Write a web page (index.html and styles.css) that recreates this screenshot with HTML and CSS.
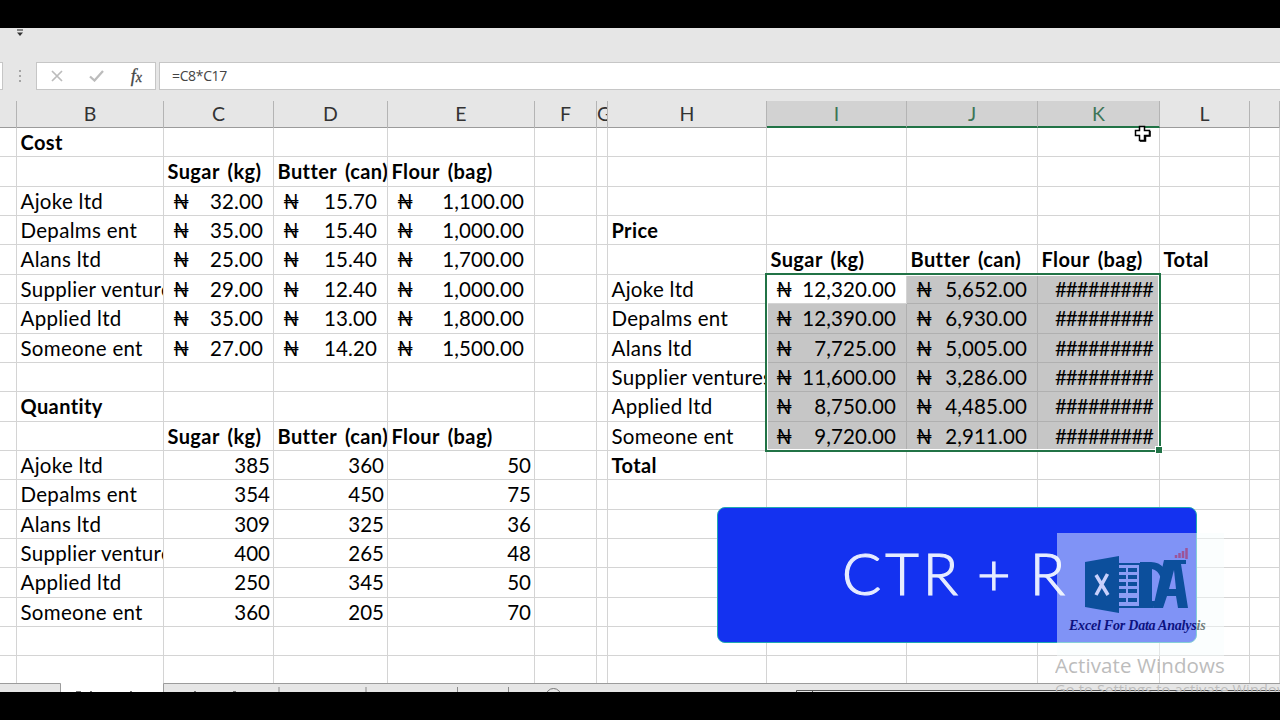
FILE: index.html
```
<!DOCTYPE html>
<html lang="en">
<head>
  <meta charset="UTF-8">
  <title>Excel For Data Analysis</title>
  <link rel="stylesheet" href="styles.css">
</head>
<body>
  <div class="window">
    <div class="toolbar">
      <svg class="more" width="8" height="8" viewBox="0 0 8 8"><path d="M1 1h6" stroke="#444" stroke-width="1.2"/><path d="M1 3.5h6L4 7z" fill="#333"/></svg>
    </div>

    <div class="formula-bar">
      <div class="name-box"></div>
      <div class="dots"><i></i><i></i><i></i></div>
      <div class="buttons">
        <svg width="12" height="12" viewBox="0 0 12 12"><path d="M1 1l10 10M11 1L1 11" stroke="#bcbcbc" stroke-width="1.7"/></svg>
        <svg width="15" height="12" viewBox="0 0 15 12"><path d="M1 6.5l4.5 4L14 1" fill="none" stroke="#bcbcbc" stroke-width="2.3"/></svg>
        <span class="fx">f<small>x</small></span>
      </div>
      <div class="formula">=C8*C17</div>
    </div>

    <div class="row head">
      <div></div><div>B</div><div>C</div><div>D</div><div>E</div><div>F</div><div class="g">G</div><div>H</div><div class="on">I</div><div class="on">J</div><div class="on">K</div><div>L</div><div></div>
    </div>

    <div class="sheet">
      <div class="row"><div></div><div class="bold">Cost</div><div></div><div></div><div></div><div></div><div></div><div></div><div></div><div></div><div></div><div></div><div></div></div>
      <div class="row"><div></div><div></div><div class="bold">Sugar (kg)</div><div class="bold">Butter (can)</div><div class="bold">Flour (bag)</div><div></div><div></div><div></div><div></div><div></div><div></div><div></div><div></div></div>
      <div class="row"><div></div><div>Ajoke ltd</div><div class="cur"><s>₦</s>32.00</div><div class="cur"><s>₦</s>15.70</div><div class="cur"><s>₦</s>1,100.00</div><div></div><div></div><div></div><div></div><div></div><div></div><div></div><div></div></div>
      <div class="row"><div></div><div>Depalms ent</div><div class="cur"><s>₦</s>35.00</div><div class="cur"><s>₦</s>15.40</div><div class="cur"><s>₦</s>1,000.00</div><div></div><div></div><div class="bold">Price</div><div></div><div></div><div></div><div></div><div></div></div>
      <div class="row"><div></div><div>Alans ltd</div><div class="cur"><s>₦</s>25.00</div><div class="cur"><s>₦</s>15.40</div><div class="cur"><s>₦</s>1,700.00</div><div></div><div></div><div></div><div class="bold">Sugar (kg)</div><div class="bold">Butter (can)</div><div class="bold">Flour (bag)</div><div class="bold">Total</div><div></div></div>
      <div class="row"><div></div><div>Supplier ventures</div><div class="cur"><s>₦</s>29.00</div><div class="cur"><s>₦</s>12.40</div><div class="cur"><s>₦</s>1,000.00</div><div></div><div></div><div>Ajoke ltd</div><div class="cur"><s>₦</s>12,320.00</div><div class="cur sel"><s>₦</s>5,652.00</div><div class="hash sel">#########</div><div></div><div></div></div>
      <div class="row"><div></div><div>Applied ltd</div><div class="cur"><s>₦</s>35.00</div><div class="cur"><s>₦</s>13.00</div><div class="cur"><s>₦</s>1,800.00</div><div></div><div></div><div>Depalms ent</div><div class="cur sel"><s>₦</s>12,390.00</div><div class="cur sel"><s>₦</s>6,930.00</div><div class="hash sel">#########</div><div></div><div></div></div>
      <div class="row"><div></div><div>Someone ent</div><div class="cur"><s>₦</s>27.00</div><div class="cur"><s>₦</s>14.20</div><div class="cur"><s>₦</s>1,500.00</div><div></div><div></div><div>Alans ltd</div><div class="cur sel"><s>₦</s>7,725.00</div><div class="cur sel"><s>₦</s>5,005.00</div><div class="hash sel">#########</div><div></div><div></div></div>
      <div class="row"><div></div><div></div><div></div><div></div><div></div><div></div><div></div><div>Supplier ventures</div><div class="cur sel"><s>₦</s>11,600.00</div><div class="cur sel"><s>₦</s>3,286.00</div><div class="hash sel">#########</div><div></div><div></div></div>
      <div class="row"><div></div><div class="bold">Quantity</div><div></div><div></div><div></div><div></div><div></div><div>Applied ltd</div><div class="cur sel"><s>₦</s>8,750.00</div><div class="cur sel"><s>₦</s>4,485.00</div><div class="hash sel">#########</div><div></div><div></div></div>
      <div class="row"><div></div><div></div><div class="bold">Sugar (kg)</div><div class="bold">Butter (can)</div><div class="bold">Flour (bag)</div><div></div><div></div><div>Someone ent</div><div class="cur sel"><s>₦</s>9,720.00</div><div class="cur sel"><s>₦</s>2,911.00</div><div class="hash sel">#########</div><div></div><div></div></div>
      <div class="row"><div></div><div>Ajoke ltd</div><div class="num">385</div><div class="num">360</div><div class="num">50</div><div></div><div></div><div class="bold">Total</div><div></div><div></div><div></div><div></div><div></div></div>
      <div class="row"><div></div><div>Depalms ent</div><div class="num">354</div><div class="num">450</div><div class="num">75</div><div></div><div></div><div></div><div></div><div></div><div></div><div></div><div></div></div>
      <div class="row"><div></div><div>Alans ltd</div><div class="num">309</div><div class="num">325</div><div class="num">36</div><div></div><div></div><div></div><div></div><div></div><div></div><div></div><div></div></div>
      <div class="row"><div></div><div>Supplier ventures</div><div class="num">400</div><div class="num">265</div><div class="num">48</div><div></div><div></div><div></div><div></div><div></div><div></div><div></div><div></div></div>
      <div class="row"><div></div><div>Applied ltd</div><div class="num">250</div><div class="num">345</div><div class="num">50</div><div></div><div></div><div></div><div></div><div></div><div></div><div></div><div></div></div>
      <div class="row"><div></div><div>Someone ent</div><div class="num">360</div><div class="num">205</div><div class="num">70</div><div></div><div></div><div></div><div></div><div></div><div></div><div></div><div></div></div>
      <div class="row"><div></div><div></div><div></div><div></div><div></div><div></div><div></div><div></div><div></div><div></div><div></div><div></div><div></div></div>
      <div class="row"><div></div><div></div><div></div><div></div><div></div><div></div><div></div><div></div><div></div><div></div><div></div><div></div><div></div></div>
    </div>

    <!-- sheet tabs, only their top edge is visible -->
    <div class="tabs">
      <svg width="1280" height="9" viewBox="0 0 1280 9">
        <path d="M0 .5H60.500V9M163.500 9V.5H1280" fill="none" stroke="#9c9c9c"/>
        <path d="M61 0h102v9H61z" fill="#fff"/>
        <path d="M76 8.500h5M90 8.500h2M130 8.500h2M194 8.500h2M233 8.500h3" stroke="#777"/>
        <path d="M279 4v5M366 4v5M457.500 4v5M508.500 4v5" stroke="#8a8a8a"/>
        <circle cx="553.500" cy="13" r="7.500" fill="none" stroke="#777"/>
        <path d="M796.500 9V7.500H1280M812.500 7v2" fill="none" stroke="#555"/>
      </svg>
    </div>
  </div>

  <div class="selection"><i class="handle"></i></div>

  <svg class="cursor" width="17" height="17" viewBox="0 0 17 17">
    <path d="M5.500 1.500h5v4h5v5h-5v5h-5v-5h-4v-5h4z" fill="#fff" stroke="#000" stroke-width="1.500"/>
    <path d="M6 16h5.500v-5H16V6" fill="none" stroke="#000" stroke-width="1.500"/>
  </svg>

  <div class="activate">
    <p class="big">Activate Windows</p>
    <p>Go to Settings to activate Windows.</p>
  </div>

  <div class="banner"><span>CTR</span><span>+</span><span>R</span></div>

  <div class="brand">
    <svg width="106" height="66" viewBox="0 0 106 66">
      <path d="M34 16h22v43H34z" fill="#8c9df5" stroke="#0c4f9c" stroke-width="2"/>
      <g fill="#0c4f9c">
        <path d="M34 20h8v4h-8zM44 20h9v4h-9zM34 27h8v4h-8zM44 27h9v4h-9zM34 34h8v4h-8zM44 34h9v4h-9zM34 41h8v4h-8zM44 41h9v4h-9zM34 50h8v4h-8zM44 50h9v4h-9z"/>
        <path d="M1 14L35 8v57L1 59z"/>
        <path d="M56 14h11q8 0 13 6l-3 10q-3-8-9-9v32h4l-3 7H56z"/>
        <path d="M80 12h22v4h-5l7 44H94l-2-12h-9l-4 12H69z"/>
      </g>
      <path d="M90 22l-5 19h7z" fill="#8493f7"/>
      <path d="M12 27l12 20M23.500 26L12 47" stroke="#c8d0fc" stroke-width="3.500"/>
      <path d="M92 10V7M95.500 10V5M99 10V3M102.500 11V0" stroke="#9c5599" stroke-width="2.500"/>
    </svg>
    <p>Excel For Data Analys<span>is</span></p>
  </div>
</body>
</html>
```
FILE: styles.css
```
* {
  margin: 0;
  padding: 0;
  box-sizing: border-box;
}
body {
  position: relative;
  width: 1280px;
  height: 720px;
  overflow: hidden;
  background: #000;
  padding-top: 28px;
  font-family: Lato, sans-serif;
  color: #000;
}
.window {
  height: 664px;
  background: #e6e6e6;
  overflow: hidden;
}
.toolbar {
  height: 34px;
  padding: 1px 0 0 16px;
}
.more {
  display: block;
}

/* formula bar */
.formula-bar {
  display: flex;
  height: 28px;
}
.name-box {
  width: 3px;
  background: #fff;
  border: 1px solid #c6c6c6;
  border-left: 0;
}
.dots {
  width: 33px;
  display: flex;
  flex-direction: column;
  align-items: center;
  justify-content: center;
  gap: 3px;
}
.dots i {
  width: 2px;
  height: 2px;
  background: #a5a5a5;
}
.buttons {
  width: 120px;
  margin-right: 3px;
  padding: 0 13px 0 14px;
  display: flex;
  align-items: center;
  justify-content: space-between;
  background: #fff;
  border: 1px solid #c6c6c6;
}
.fx {
  font: italic 18px "Liberation Serif", serif;
  color: #444;
  -webkit-text-stroke: 0.3px #444;
}
.fx small {
  font-size: 14px;
}
.formula {
  flex: 1;
  padding-left: 12px;
  font: 14px/26px "Open Sans", sans-serif;
  letter-spacing: -0.35px;
  color: #444;
  background: #fff;
  border: 1px solid #c6c6c6;
  border-right: 0;
}

/* cells */
.row {
  display: grid;
  grid-template-columns: 17px 147px 110px 114px 147px 62px 11px 159px 140px 131px 122px 90px 30px;
  height: 29.36px;
}
.row > div {
  overflow: hidden;
  white-space: nowrap;
  padding-left: 3.5px;
  font-size: 20.5px;
  line-height: 28px;
  letter-spacing: 0.3px;
  border-right: 1px solid #d4d4d4;
  border-bottom: 1px solid #d4d4d4;
}
.sheet {
  height: 555px;
  overflow: hidden;
  background: #fff;
}
.row.head {
  height: 38px;
  padding-top: 11px;
  border-bottom: 1px solid #9b9b9b;
}
.row.head > div {
  padding: 0;
  text-align: center;
  font-size: 19.5px;
  line-height: 25px;
  letter-spacing: 0;
  color: #333;
  border-bottom: 0;
  border-right-color: #b4b4b4;
}
.row.head > .on {
  height: 27px;
  background: #d2d2d2;
  color: #3c7557;
  border-bottom: 2px solid #217346;
}
.row > .bold {
  font-weight: bold;
  font-size: 20px;
  letter-spacing: 0.4px;
  word-spacing: 3px;
}
.row > .cur {
  display: flex;
  justify-content: space-between;
  padding: 0 10px 0 9px;
  letter-spacing: 0.12px;
}
.cur s {
  text-decoration: none;
}
.row > .num {
  text-align: right;
  padding-right: 3px;
  letter-spacing: 0;
}
.row > .hash {
  text-align: right;
  padding-right: 6px;
  letter-spacing: -1px;
}
.row > .sel {
  background: #c6c6c6;
  border-color: #b0b0b0;
}
.tabs svg {
  display: block;
}

.selection {
  position: absolute;
  left: 765px;
  top: 273px;
  width: 396px;
  height: 179px;
  border: 2px solid #217346;
  box-shadow: inset 0 0 0 1px #fff;
}
.handle {
  position: absolute;
  right: -3px;
  bottom: -3px;
  width: 6px;
  height: 6px;
  background: #217346;
  outline: 1px solid #fff;
}
.cursor {
  position: absolute;
  left: 1134px;
  top: 125px;
}

/* windows watermark */
.activate {
  position: absolute;
  left: 1055px;
  top: 650px;
  width: 225px;
  height: 42px;
  overflow: hidden;
  white-space: nowrap;
  font: 14.5px/20px "Open Sans", sans-serif;
  letter-spacing: 0.2px;
  color: #bcbcbc;
}
.activate .big {
  font-size: 20.5px;
  line-height: 30px;
  letter-spacing: 0.1px;
}

.banner {
  position: absolute;
  left: 717px;
  top: 507px;
  width: 480px;
  height: 136px;
  padding-left: 124px;
  display: flex;
  gap: 15px;
  font-size: 58px;
  line-height: 130px;
  font-weight: 300;
  letter-spacing: 4px;
  color: #e6ecff;
  -webkit-text-stroke: 1.2px #e6ecff;
  background: #1432f0;
  border: 1.5px solid #20a8b4;
  border-radius: 8px;
}
.brand {
  position: absolute;
  left: 1057px;
  top: 533px;
  width: 167px;
  height: 123px;
  padding: 15px 0 0 27px;
  background: rgba(246, 252, 252, 0.48);
}
.brand svg {
  display: block;
}
.brand p {
  margin: 2px 0 0 -15px;
  white-space: nowrap;
  font: italic bold 14px/19px "Liberation Serif", serif;
  letter-spacing: -0.22px;
  color: #0c1280;
}
.brand span {
  color: #71807e;
}
```
